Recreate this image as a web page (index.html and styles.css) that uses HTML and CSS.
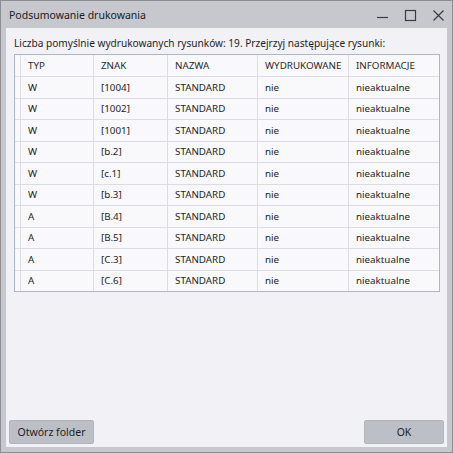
FILE: index.html
```html
<!DOCTYPE html>
<html lang="pl">
<head>
  <meta charset="UTF-8">
  <title>Podsumowanie drukowania</title>
  <link rel="stylesheet" href="styles.css">
</head>
<body>
  <div class="window">
    <div class="titlebar">
      <span class="title">Podsumowanie drukowania</span>
      <div class="controls">
        <svg class="ctl" width="28" height="20" viewBox="0 0 28 20"><path d="M9 12.5h11" stroke="#3a3c40" stroke-width="1.2"/></svg>
        <svg class="ctl" width="28" height="20" viewBox="0 0 28 20"><rect x="9.5" y="5.5" width="10" height="10" fill="none" stroke="#3a3c40" stroke-width="1.2"/></svg>
        <svg class="ctl" width="28" height="20" viewBox="0 0 28 20"><path d="M9.5 5.5l10 10M19.5 5.5l-10 10" stroke="#3a3c40" stroke-width="1.2"/></svg>
      </div>
    </div>
    <div class="content">
      <p class="summary">Liczba pomyślnie wydrukowanych rysunków: 19. Przejrzyj następujące rysunki:</p>
      <div class="grid-box">
        <table class="grid">
          <thead>
            <tr><th class="gutter"></th><th>TYP</th><th>ZNAK</th><th>NAZWA</th><th>WYDRUKOWANE</th><th>INFORMACJE</th></tr>
          </thead>
          <tbody>
            <tr><td class="gutter"></td><td>W</td><td>[1004]</td><td>STANDARD</td><td>nie</td><td>nieaktualne</td></tr>
            <tr><td class="gutter"></td><td>W</td><td>[1002]</td><td>STANDARD</td><td>nie</td><td>nieaktualne</td></tr>
            <tr><td class="gutter"></td><td>W</td><td>[1001]</td><td>STANDARD</td><td>nie</td><td>nieaktualne</td></tr>
            <tr><td class="gutter"></td><td>W</td><td>[b.2]</td><td>STANDARD</td><td>nie</td><td>nieaktualne</td></tr>
            <tr><td class="gutter"></td><td>W</td><td>[c.1]</td><td>STANDARD</td><td>nie</td><td>nieaktualne</td></tr>
            <tr><td class="gutter"></td><td>W</td><td>[b.3]</td><td>STANDARD</td><td>nie</td><td>nieaktualne</td></tr>
            <tr><td class="gutter"></td><td>A</td><td>[B.4]</td><td>STANDARD</td><td>nie</td><td>nieaktualne</td></tr>
            <tr><td class="gutter"></td><td>A</td><td>[B.5]</td><td>STANDARD</td><td>nie</td><td>nieaktualne</td></tr>
            <tr><td class="gutter"></td><td>A</td><td>[C.3]</td><td>STANDARD</td><td>nie</td><td>nieaktualne</td></tr>
            <tr><td class="gutter"></td><td>A</td><td>[C.6]</td><td>STANDARD</td><td>nie</td><td>nieaktualne</td></tr>
          </tbody>
        </table>
      </div>
      <div class="spacer"></div>
      <div class="buttons">
        <button class="btn">Otwórz folder</button>
        <button class="btn btn-ok">OK</button>
      </div>
    </div>
  </div>
</body>
</html>
```

FILE: styles.css
```css
html, body {
  margin: 0;
  padding: 0;
}
body {
  font-family: "Noto Sans", "Open Sans", sans-serif;
  color: #1e1e1e;
  width: 453px;
  height: 453px;
}
.window {
  box-sizing: border-box;
  width: 453px;
  height: 453px;
  background-color: #c6c8cd;
  border: 1px solid #8c8e93;
  padding: 0 5px 5px 5px;
  display: flex;
  flex-direction: column;
}
.titlebar {
  height: 27px;
  display: flex;
  align-items: center;
  justify-content: space-between;
}
.title {
  font-size: 10.5px;
  padding-left: 3px;
  padding-top: 1px;
  color: #202124;
}
.controls {
  display: flex;
  margin-right: -5px;
}
.ctl {
  display: block;
}
.content {
  flex: 1;
  background-color: #f2f2f6;
  display: flex;
  flex-direction: column;
  padding: 0 3px 3px 3px;
}
.summary {
  margin: 0;
  font-size: 10.1px;
  padding: 8px 0 0 5px;
  height: 18px;
}
.grid-box {
  margin: 0 4px 0 5px;
  border: 1px solid #a9b7c9;
  background-color: #f9f9fb;
}
.grid {
  width: 100%;
  border-collapse: collapse;
  table-layout: fixed;
  font-size: 9.8px;
}
.grid th, .grid td {
  border-left: 1px solid #dcdde3;
  border-bottom: 1px solid #dcdde3;
  text-align: left;
  padding: 0 0 0 7px;
  white-space: nowrap;
  overflow: hidden;
}
.grid th {
  font-weight: normal;
  height: 21px;
  color: #2a2a2a;
}
.grid td {
  height: 20.5px;
}
.grid tr > :first-child {
  border-left: none;
}
.grid tbody tr:last-child td {
  border-bottom: none;
}
.grid .gutter {
  width: 5px;
  padding: 0;
}
.grid th:nth-child(2) { width: 65px; }
.grid th:nth-child(3) { width: 66px; }
.grid th:nth-child(4) { width: 82px; }
.grid th:nth-child(5) { width: 83px; }
.spacer {
  flex: 1;
}
.buttons {
  display: flex;
  justify-content: space-between;
}
.btn {
  font-family: "Noto Sans", "Open Sans", sans-serif;
  font-size: 10.5px;
  color: #1e1e1e;
  background-color: #bcbfc6;
  border: 1px solid #b2b5bc;
  border-radius: 2px;
  height: 24px;
  padding: 0;
  width: 85px;
  white-space: nowrap;
}
.btn-ok {
  width: 80px;
}
```
